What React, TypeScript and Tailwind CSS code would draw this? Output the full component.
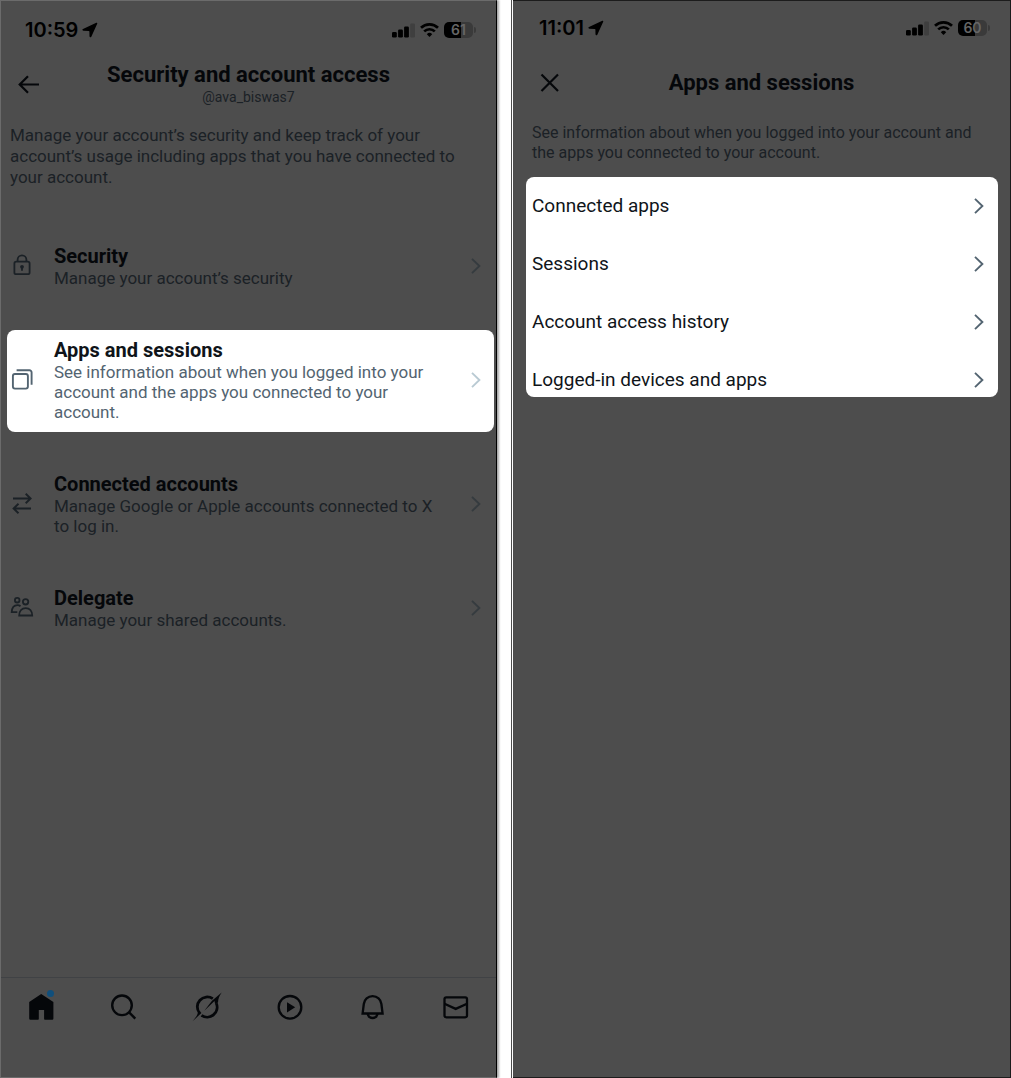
import type { ReactNode } from 'react';

const settings = [
  {
    title: 'Security',
    lines: 'Manage your account’s security',
    icon: <LockIcon />,
    active: false,
  },
  {
    title: 'Apps and sessions',
    lines:
      'See information about when you logged into your account and the apps you connected to your account.',
    icon: <StackIcon />,
    active: true,
  },
  {
    title: 'Connected accounts',
    lines: 'Manage Google or Apple accounts connected to X to log in.',
    icon: <SwapIcon />,
    active: false,
  },
  {
    title: 'Delegate',
    lines: 'Manage your shared accounts.',
    icon: <PeopleIcon />,
    active: false,
  },
];

const sessionLinks = [
  'Connected apps',
  'Sessions',
  'Account access history',
  'Logged-in devices and apps',
];

function LockIcon() {
  return (
    <svg viewBox="0 0 24 24" className="size-6" fill="none" stroke="currentColor" strokeWidth="1.8">
      <rect x="4.4" y="7.6" width="15.200" height="12.600" rx="1.8" />
      <path d="M7.6 7.600V5.800a4.4 4.4 0 0 1 8.8 0v1.800" />
      <circle cx="12" cy="12.800" r="1.9" fill="currentColor" stroke="none" />
      <path d="M12 12.600v4.2" />
    </svg>
  );
}

function StackIcon() {
  return (
    <svg viewBox="0 0 24 24" className="size-6" fill="none" stroke="currentColor" strokeWidth="1.9">
      <rect x="2.9" y="6" width="15" height="14.600" rx="2" />
      <path d="M6.6 2.200h12.800a2.2 2.2 0 0 1 2.2 2.2v12.4" />
    </svg>
  );
}

function SwapIcon() {
  return (
    <svg viewBox="0 0 24 24" className="size-6" fill="none" stroke="currentColor" strokeWidth="1.9">
      <path d="M3 6.500h17M15.700 1.800 20.600 6.500l-4.900 4.700M21 16.500H4M8.500 11.800 3.600 16.500l4.900 4.700" />
    </svg>
  );
}

function PeopleIcon() {
  return (
    <svg viewBox="0 0 24 24" className="size-6" fill="none" stroke="currentColor" strokeWidth="1.8">
      <circle cx="7.2" cy="4.200" r="2.3" />
      <circle cx="15.6" cy="5.800" r="2.7" />
      <path d="M9.200 19.500c0-4.500 2.600-7.400 6.500-7.400s6.500 2.900 6.500 7.400z" />
      <path d="M10.500 10.200c-.8-.7-1.800-1.100-3-1.100-3.500 0-5.600 2.800-5.800 7.100h5.600" />
    </svg>
  );
}

function Chevron({ className }: { className: string }) {
  return (
    <svg
      viewBox="0 0 10 16"
      className={`h-4 w-2.5 shrink-0 ${className}`}
      fill="none"
      stroke="currentColor"
      strokeWidth="1.9"
    >
      <path d="M1 .9 8.400 8 1 15.100" />
    </svg>
  );
}

function StatusBar({ time, battery }: { time: string; battery: string }) {
  return (
    <div className="flex h-[58px] items-center justify-between pr-5 pl-6 text-black">
      <div className="flex items-center gap-1">
        <span className="font-['Inter',sans-serif] text-[20px] leading-6 font-semibold">{time}</span>
        <svg viewBox="0 0 16 16" className="size-4" fill="currentColor">
          <path d="M14.300.8c.7-.3 1.200.2.900.9L9.300 14.700c-.5 1-1.800.8-1.800-.4L7.400 9.500c0-.4-.2-.6-.6-.6L1.400 8.800C.2 8.800-.1 7.400 1 6.900z" />
        </svg>
      </div>
      <div className="flex items-center gap-[5px]">
        <svg viewBox="0 0 23 15" className="h-[15px] w-[23px]" fill="currentColor">
          <rect y="9" width="4.800" height="5.500" rx="1.300" />
          <rect x="6.100" y="6.500" width="4.800" height="8" rx="1.300" />
          <rect x="12.100" y="3.500" width="4.800" height="11" rx="1.300" />
          <rect x="18.200" y=".500" width="4.800" height="14" rx="1.300" fill="#3f3f3f" />
        </svg>
        <svg viewBox="0 0 19 14" className="h-3.5 w-[19px]" fill="none" stroke="currentColor" strokeWidth="2.700">
          <path d="M1 4.800a12.300 12.300 0 0 1 17 0" />
          <path d="M4.200 8.400a7.600 7.600 0 0 1 10.600 0" />
          <path d="M9.500 13.900 6.800 11.200a3.800 3.800 0 0 1 5.400 0z" fill="currentColor" stroke="none" />
        </svg>
        <div className="flex items-center gap-px">
          <span className="flex h-4 w-[29px] items-center justify-center rounded-[5px] bg-linear-to-r from-black from-60% to-[#3a3a3a] to-60% font-['Inter',sans-serif] text-[14px] leading-4 font-semibold text-[#666]">
            {battery}
          </span>
          <span className="h-1.5 w-0.5 rounded-r-full bg-[#3a3a3a]" />
        </div>
      </div>
    </div>
  );
}

function TabButton({ label, children }: { label: string; children: ReactNode }) {
  return (
    <button type="button" aria-label={label} className="flex justify-center">
      {children}
    </button>
  );
}

function TabBar() {
  return (
    <nav className="mt-auto grid h-[100px] grid-cols-6 items-start border-t border-[#404245] pt-3.5 text-[#05070a]">
      <TabButton label="Home">
        <span className="relative">
          <svg viewBox="0 0 30 30" className="size-[30px]" fill="currentColor">
            <path d="M14.200 2 26.400 9.900V26.600q0 1.200-1.200 1.200h-7.300q-.8 0-.8-.8v-9h-5.300v9q0 .8-.8.8H3.400q-1.200 0-1.200-1.200V9.900z" />
          </svg>
          <span className="absolute -top-0.5 right-[3px] size-[7px] rounded-full bg-[#104f7c]" />
        </span>
      </TabButton>
      <TabButton label="Search">
        <svg viewBox="0 0 30 30" className="size-[30px]" fill="none" stroke="currentColor" strokeWidth="2.400">
          <circle cx="12" cy="13.300" r="9.800" />
          <path d="m18.900 20.200 6.400 6.400" />
        </svg>
      </TabButton>
      <TabButton label="Grok">
        <svg viewBox="0 0 30 30" className="size-[30px]" fill="none" stroke="currentColor" strokeWidth="2.800">
          <path d="M7.600 21.200A9.900 9.900 0 0 1 20.800 6.700" />
          <path d="M24.300 11.300A9.900 9.900 0 0 1 9.500 23.300" />
          <path
            d="M29.700.6C27.300 4 26.200 6.800 26 10.500l-2.900 1.600-.6-3.200L12.300 18.700 20 8.700zM.6 29.300C3 26.200 5.300 24 5.900 20.500L7.700 19.200 9.400 21z"
            fill="currentColor"
            stroke="none"
          />
        </svg>
      </TabButton>
      <TabButton label="Video">
        <svg viewBox="0 0 30 30" className="size-[30px]" fill="none" stroke="currentColor" strokeWidth="2.300">
          <circle cx="15" cy="15.300" r="11.300" />
          <path d="M12 10.200v10.200l8.200-5.100z" fill="currentColor" stroke="none" />
        </svg>
      </TabButton>
      <TabButton label="Notifications">
        <svg viewBox="0 0 30 30" className="size-[30px]" fill="none" stroke="currentColor" strokeWidth="2.300">
          <path d="M15.600 4.200c-4.700 0-8.300 3.300-8.800 7.800l-1.200 9.500h20l-1.200-9.500c-.5-4.500-4.100-7.800-8.800-7.800z" />
          <path d="M10.600 21.500c.5 2.800 2.500 4.500 5 4.500s4.500-1.700 5-4.500" />
        </svg>
      </TabButton>
      <TabButton label="Messages">
        <svg viewBox="0 0 30 30" className="size-[30px]" fill="none" stroke="currentColor" strokeWidth="2.300">
          <rect x="4.500" y="5.300" width="22.500" height="20" rx="1.800" />
          <path d="m4.500 11.800 11.200 5.100L27 11.800" />
        </svg>
      </TabButton>
    </nav>
  );
}

function SecurityScreen() {
  return (
    <section className="flex flex-col border-t border-r border-b border-l border-t-[#6b6b6b] border-r-black border-b-[#6b6b6b] border-l-[#6b6b6b] bg-[#4d4d4d] shadow-[2px_0_2px_rgba(0,0,0,0.35)]">
      <StatusBar time="10:59" battery="61" />
      <header className="grid grid-cols-[40px_1fr_40px] items-center py-1">
        <button type="button" aria-label="Back" className="pl-4 text-[#05070a]">
          <svg viewBox="0 0 24 24" className="size-6" fill="none" stroke="currentColor" strokeWidth="2.200">
            <path d="M22 11.500H3M11 3.200 2.700 11.500l8.300 8.300" />
          </svg>
        </button>
        <div className="text-center">
          <h1 className="text-[22px] leading-6 font-bold text-[#05070a]">Security and account access</h1>
          <p className="text-[14px] leading-5 text-[#1b2126]">@ava_biswas7</p>
        </div>
      </header>
      <p className="mt-3.5 px-[9px] text-[17px] leading-[21px] text-[#1b2126]">
        Manage your account’s security and keep track of your account’s usage including apps that
        you have connected to your account.
      </p>
      <ul className="mt-12 mr-0.5 mb-12 ml-1.5 flex flex-col gap-8">
        {settings.map((item) => (
          <li key={item.title}>
            <a
              href="#"
              className={`flex items-center rounded-lg pt-2 pr-[13px] pb-2.5 pl-[3px] ${
                item.active ? 'bg-white text-[#536471]' : 'text-[#1b2126]'
              }`}
            >
              {item.icon}
              <span className="ml-5 flex-1 pr-6">
                <span
                  className={`block text-[20px] leading-6 font-bold ${
                    item.active ? 'text-[#0f1419]' : 'text-[#05070a]'
                  }`}
                >
                  {item.title}
                </span>
                <span className="block text-[17px] leading-5">{item.lines}</span>
              </span>
              <Chevron className={item.active ? 'text-[#b9cad3]' : 'text-[#353b3f]'} />
            </a>
          </li>
        ))}
      </ul>
      <TabBar />
    </section>
  );
}

function SessionsScreen() {
  return (
    <div className="flex border-l border-[#4d4d4d] bg-white pl-px">
      <section className="flex-1 border-t border-r border-b border-[#1c1c1c] bg-[#4d4d4d]">
        <div className="-mt-0.5 pl-0.5">
          <StatusBar time="11:01" battery="60" />
        </div>
        <header className="grid grid-cols-[56px_1fr_56px] items-center pt-3.5">
          <button type="button" aria-label="Close" className="pl-6 text-[#05070a]">
            <svg viewBox="0 0 24 24" className="size-6" fill="none" stroke="currentColor" strokeWidth="2.200">
              <path d="m4.500 3.500 16.500 16.500M21 3.500 4.500 20" />
            </svg>
          </button>
          <h2 className="text-center text-[22px] leading-6 font-bold text-[#05070a]">
            Apps and sessions
          </h2>
        </header>
        <p className="mt-7 px-[19px] text-[16px] leading-5 text-[#1b2126]">
          See information about when you logged into your account and the apps you connected to
          your account.
        </p>
        <ul className="mt-3.5 mr-3 ml-[13px] flex flex-col gap-[34px] rounded-lg bg-white pt-[17px] pb-[5px]">
          {sessionLinks.map((label) => (
            <li key={label}>
              <a
                href="#"
                className="flex items-center justify-between pr-3.5 pl-1.5 text-[19px] leading-6 text-[#0f1419]"
              >
                {label}
                <Chevron className="text-[#536471]" />
              </a>
            </li>
          ))}
        </ul>
      </section>
    </div>
  );
}

export default function App() {
  return (
    <main className="grid min-h-screen grid-cols-[497fr_500fr] gap-3.5 bg-white font-['Roboto',sans-serif]">
      <SecurityScreen />
      <SessionsScreen />
    </main>
  );
}
